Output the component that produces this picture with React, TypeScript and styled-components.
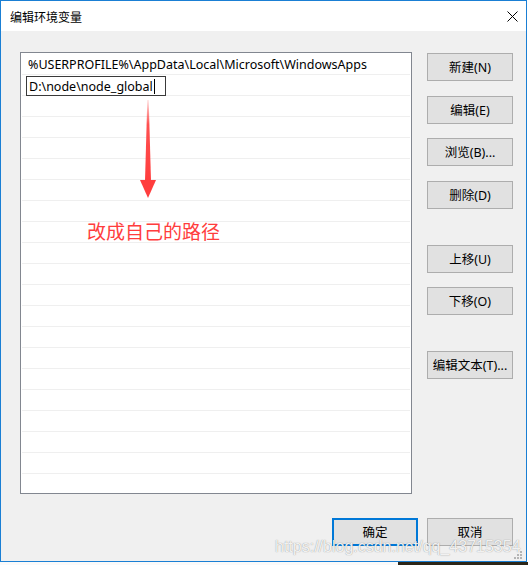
import React from "react";
import styled, { createGlobalStyle } from "styled-components";

const Global = createGlobalStyle`
  html, body { margin: 0; padding: 0; }
  body {
    background: #ffffff;
    font-family: "Segoe UI", "Noto Sans", "Noto Sans CJK SC", sans-serif;
  }
`;

const UI_FONT = `"Segoe UI", "Noto Sans", "Noto Sans CJK SC", sans-serif`;

const Page = styled.div`
  position: relative;
  width: 528px;
  height: 565px;
  overflow: hidden;
  background: #ffffff;
`;

const Window = styled.div`
  width: 527px;
  height: 562px;
  box-sizing: border-box;
  border: 1px solid #1a7fd4;
  display: flex;
  flex-direction: column;
  background: #f0f0f0;
`;

const TitleBar = styled.div`
  height: 30px;
  flex: none;
  background: #ffffff;
  display: flex;
  align-items: center;
  justify-content: space-between;
  padding-left: 9px;
`;

const Title = styled.span`
  font-family: "Noto Sans CJK SC", sans-serif;
  font-size: 12px;
  color: #000;
  line-height: 1;
  padding-top: 1px;
`;

const CloseBtn = styled.div`
  width: 28px;
  height: 30px;
  display: flex;
  align-items: center;
  justify-content: center;
`;

const Body = styled.div`
  flex: 1;
  display: flex;
  flex-direction: column;
  padding: 21px 13px 15px 19px;
`;

const MainRow = styled.div`
  display: flex;
  gap: 15px;
  height: 442px;
`;

const ListBox = styled.div`
  position: relative;
  width: 392px;
  height: 442px;
  box-sizing: border-box;
  border: 1px solid #828790;
  background: #ffffff;
  padding: 1px 1px 0;
  overflow: hidden;
`;

const Row = styled.div<{ $editing?: boolean }>`
  height: 20px;
  border-bottom: 1px solid #efefef;
  display: flex;
  align-items: ${(p) => (p.$editing ? "flex-start" : "center")};
  padding-left: ${(p) => (p.$editing ? "4px" : "6px")};
  font-family: ${UI_FONT};
  font-size: 12.5px;
  color: #000;
  white-space: nowrap;
`;

const EditBox = styled.div`
  margin-top: 1px;
  width: 140px;
  height: 20px;
  box-sizing: border-box;
  border: 1px solid #3a3a3a;
  background: #fff;
  padding-left: 2px;
  display: flex;
  align-items: center;
  font-family: ${UI_FONT};
  font-size: 12.5px;
  color: #000;
`;

const Caret = styled.span`
  display: inline-block;
  width: 1px;
  height: 15px;
  background: #000;
  margin-left: 1px;
`;

const Annotation = styled.div`
  position: absolute;
  left: 66px;
  top: 168px;
  font-family: "Noto Sans CJK SC", sans-serif;
  font-size: 19px;
  line-height: 19px;
  color: #ff3d3d;
  white-space: nowrap;
`;

const ArrowSvg = styled.svg`
  position: absolute;
  left: 117px;
  top: 45px;
`;

const ButtonColumn = styled.div`
  display: flex;
  flex-direction: column;
  padding-top: 1px;
`;

const Button = styled.div<{ $gap?: number; $primary?: boolean }>`
  width: 86px;
  height: 28px;
  box-sizing: border-box;
  margin-top: ${(p) => p.$gap ?? 0}px;
  border: ${(p) => (p.$primary ? "2px solid #0078d7" : "1px solid #adadad")};
  background: #e1e1e1;
  display: flex;
  align-items: center;
  justify-content: center;
  padding-bottom: 2px;
  font-family: ${UI_FONT};
  font-size: 12.5px;
  color: #000;
  white-space: nowrap;
`;

const BottomRow = styled.div`
  display: flex;
  justify-content: flex-end;
  gap: 9px;
  margin-top: 24px;
`;

const DesktopStrip = styled.div`
  display: flex;
  height: 3px;
`;

const StripPart = styled.div<{ $dark?: boolean }>`
  flex: ${(p) => (p.$dark ? "1" : "0 0 398px")};
  background: ${(p) => (p.$dark ? "#2c2618" : "#fafafa")};
`;

const Watermark = styled.div`
  position: absolute;
  left: 275px;
  top: 538px;
  font-family: "Liberation Sans", Arial, sans-serif;
  font-size: 16px;
  line-height: 18px;
  color: rgba(255, 255, 255, 0.9);
  text-shadow: 0 0 1px rgba(80, 80, 80, 0.7);
  white-space: nowrap;
  pointer-events: none;
`;

const Grip = styled.svg`
  position: absolute;
  left: 514px;
  top: 551px;
`;

const ROW_COUNT = 22;

export default function App() {
  const rows = Array.from({ length: ROW_COUNT }, (_, i) => i);
  return (
    <>
      <Global />
      <Page>
        <Window>
          <TitleBar>
            <Title>编辑环境变量</Title>
            <CloseBtn>
              <svg width="11" height="11" viewBox="0 0 11 11">
                <path d="M0.5 0.5 L10.5 10.5 M10.5 0.5 L0.5 10.5" stroke="#000" strokeWidth="1" />
              </svg>
            </CloseBtn>
          </TitleBar>
          <Body>
            <MainRow>
              <ListBox>
                {rows.map((i) =>
                  i === 0 ? (
                    <Row key={i}>%USERPROFILE%\AppData\Local\Microsoft\WindowsApps</Row>
                  ) : i === 1 ? (
                    <Row key={i} $editing>
                      <EditBox>
                        D:\node\node_global
                        <Caret />
                      </EditBox>
                    </Row>
                  ) : (
                    <Row key={i} />
                  )
                )}
                <ArrowSvg width="20" height="102" viewBox="0 0 20 102">
                  <defs>
                    <linearGradient id="shaft" x1="0" y1="0" x2="0" y2="1">
                      <stop offset="0" stopColor="#ff3d3d" stopOpacity="0.15" />
                      <stop offset="0.3" stopColor="#ff3d3d" stopOpacity="0.9" />
                      <stop offset="1" stopColor="#ff3d3d" stopOpacity="1" />
                    </linearGradient>
                  </defs>
                  <polygon points="9.3,2 10.7,2 13,83 7,83" fill="url(#shaft)" />
                  <polygon points="2,82 18,82 10,100" fill="#ff3d3d" />
                </ArrowSvg>
                <Annotation>改成自己的路径</Annotation>
              </ListBox>
              <ButtonColumn>
                <Button>新建(N)</Button>
                <Button $gap={15}>编辑(E)</Button>
                <Button $gap={14}>浏览(B)...</Button>
                <Button $gap={15}>删除(D)</Button>
                <Button $gap={36}>上移(U)</Button>
                <Button $gap={14}>下移(O)</Button>
                <Button $gap={36}>编辑文本(T)...</Button>
              </ButtonColumn>
            </MainRow>
            <BottomRow>
              <Button $primary>确定</Button>
              <Button>取消</Button>
            </BottomRow>
          </Body>
        </Window>
        <DesktopStrip>
          <StripPart />
          <StripPart $dark />
        </DesktopStrip>
        <Watermark>https://blog.csdn.net/qq_43715354</Watermark>
        <Grip width="9" height="9" viewBox="0 0 9 9">
          <rect x="6" y="0" width="2" height="2" fill="#b4b4b4" />
          <rect x="3" y="3" width="2" height="2" fill="#b4b4b4" />
          <rect x="6" y="3" width="2" height="2" fill="#b4b4b4" />
          <rect x="0" y="6" width="2" height="2" fill="#b4b4b4" />
          <rect x="3" y="6" width="2" height="2" fill="#b4b4b4" />
          <rect x="6" y="6" width="2" height="2" fill="#b4b4b4" />
        </Grip>
      </Page>
    </>
  );
}
